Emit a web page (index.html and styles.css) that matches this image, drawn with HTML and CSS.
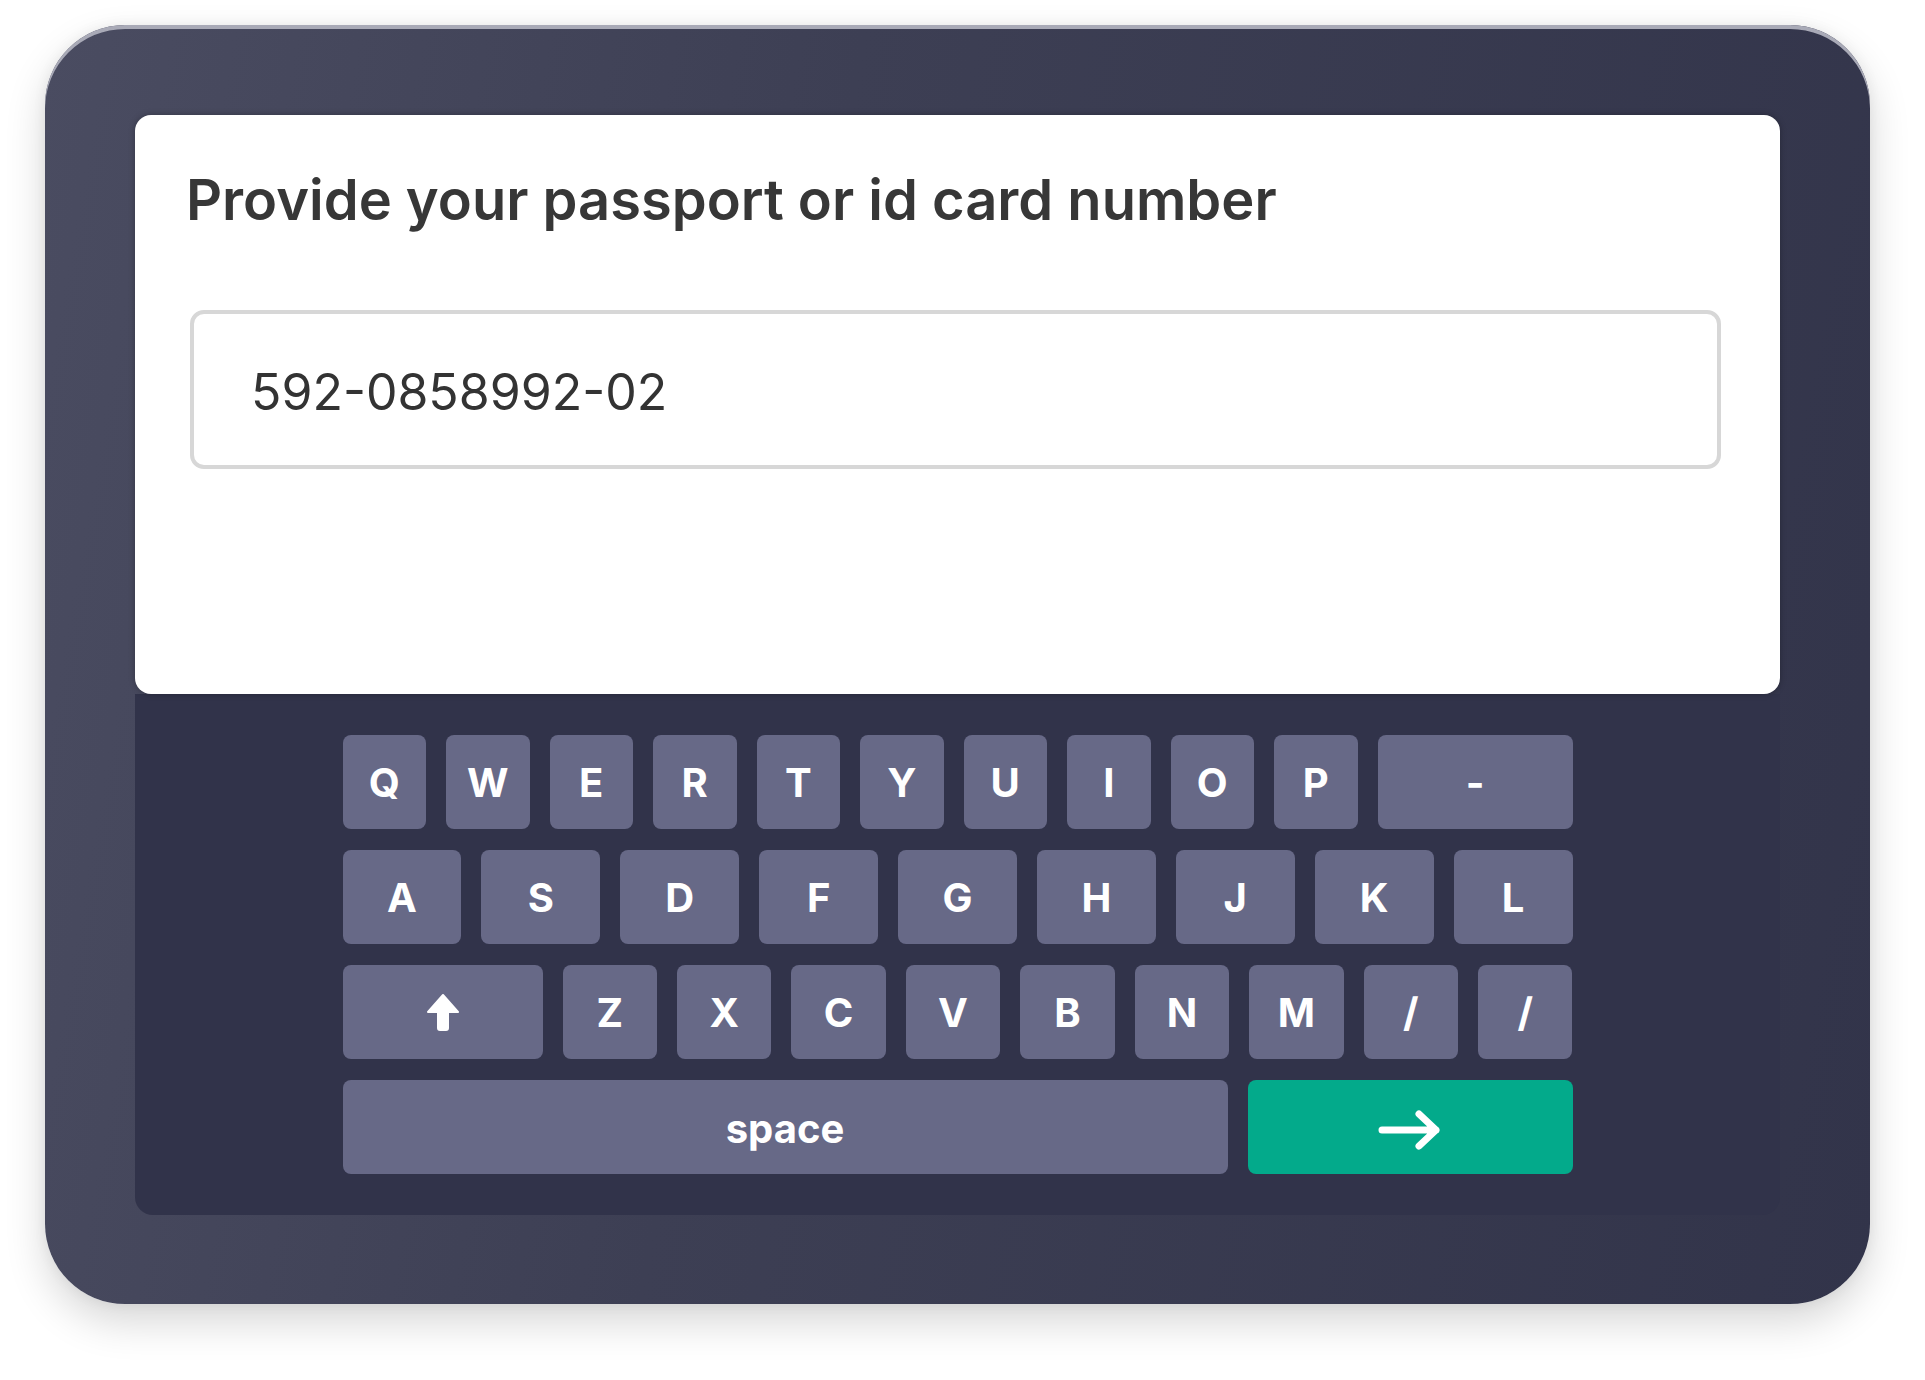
FILE: index.html
```html
<!DOCTYPE html>
<html lang="en">
<head>
<meta charset="utf-8">
<title>Passport number</title>
<link rel="stylesheet" href="styles.css">
</head>
<body>
<div class="device">
  <div class="screen">
    <h1 class="title">Provide your passport or id card number</h1>
    <div class="field"><span class="field-value">592-0858992-02</span></div>
  </div>
  <div class="keyboard">
    <div class="kb-rows">
      <div class="kb-row row-top">
        <div class="key">Q</div><div class="key">W</div><div class="key">E</div><div class="key">R</div><div class="key">T</div><div class="key">Y</div><div class="key">U</div><div class="key">I</div><div class="key">O</div><div class="key">P</div><div class="key key-dash">-</div>
      </div>
      <div class="kb-row row-home">
        <div class="key">A</div><div class="key">S</div><div class="key">D</div><div class="key">F</div><div class="key">G</div><div class="key">H</div><div class="key">J</div><div class="key">K</div><div class="key">L</div>
      </div>
      <div class="kb-row row-bottom">
        <div class="key key-shift">
          <svg class="shift-icon" width="32" height="37" viewBox="0 0 32 37"><path d="M16 1 L31 18 L21 18 L21 34 Q21 36 19 36 L13 36 Q11 36 11 34 L11 18 L1 18 Z" fill="#fff" stroke="#fff" stroke-width="2" stroke-linejoin="round"/></svg>
        </div>
        <div class="key">Z</div><div class="key">X</div><div class="key">C</div><div class="key">V</div><div class="key">B</div><div class="key">N</div><div class="key">M</div><div class="key">/</div><div class="key">/</div>
      </div>
      <div class="kb-row row-space">
        <div class="key key-space">space</div>
        <div class="key key-enter">
          <svg class="enter-icon" width="64" height="42" viewBox="0 0 64 42"><path d="M4 21 H58 M41 5 L58 21 L41 37" fill="none" stroke="#fff" stroke-width="7" stroke-linecap="round" stroke-linejoin="round"/></svg>
        </div>
      </div>
    </div>
  </div>
</div>
</body>
</html>
```
FILE: styles.css
```css
html, body {
  margin: 0;
  padding: 0;
  background: #ffffff;
}

body {
  font-family: Inter, "Noto Sans", "Liberation Sans", sans-serif;
  min-height: 1380px;
  padding-top: 25px;
  box-sizing: border-box;
}

.device {
  box-sizing: border-box;
  width: 1825px;
  height: 1279px;
  margin: 0 0 0 45px;
  padding: 90px 90px 89px 90px;
  border-radius: 80px;
  background: linear-gradient(100deg, #4a4c61 0%, #3d3f54 40%, #32344a 100%);
  box-shadow: inset 0 4px 0 #a9aab7, 0 18px 40px rgba(0, 0, 0, 0.16), 0 0 14px rgba(0, 0, 0, 0.06);
  display: flex;
  flex-direction: column;
}

.screen {
  position: relative;
  z-index: 1;
  box-sizing: border-box;
  height: 579px;
  background: #ffffff;
  border-radius: 16px;
  padding: 52px 59px 0 51px;
  box-shadow: 0 0 6px rgba(0, 0, 0, 0.28);
}

.title {
  margin: 0;
  font-size: 56px;
  line-height: 66px;
  font-weight: 600;
  color: #373737;
  letter-spacing: 0;
}

.field {
  box-sizing: border-box;
  margin: 77px 0 0 4px;
  height: 159px;
  border: 4px solid #d7d7d7;
  border-radius: 14px;
  display: flex;
  align-items: center;
  padding: 0 0 0 57px;
}

.field-value {
  font-size: 50px;
  font-weight: 400;
  color: #333333;
  line-height: 60px;
  padding-top: 4px;
}

.keyboard {
  box-sizing: border-box;
  height: 521px;
  background: #31334a;
  border-radius: 0 0 18px 18px;
  padding: 41px 0;
}

.kb-rows {
  width: 1230px;
  margin: 0 auto;
  display: flex;
  flex-direction: column;
  gap: 21px;
}

.kb-row {
  display: flex;
  gap: 20px;
  height: 94px;
}

.key {
  flex: 1 1 0;
  min-width: 0;
  background: #676987;
  border-radius: 8px;
  display: flex;
  align-items: center;
  justify-content: center;
  color: #ffffff;
  font-size: 40px;
  font-weight: 700;
  line-height: 1;
  padding-top: 2px;
  box-sizing: border-box;
}

.row-top .key {
  flex: 0 0 83.5px;
}

.row-top .key-dash {
  flex: 1 1 0;
}

.row-bottom .key-shift {
  flex: 0 0 200px;
  padding-top: 0;
}

.key-space {
  font-size: 40px;
  padding-top: 4px;
}

.key-enter {
  flex: 0 0 325px;
  background: #03aa8b;
  padding-top: 6px;
}

.shift-icon {
  display: block;
}

.enter-icon {
  display: block;
}
```
